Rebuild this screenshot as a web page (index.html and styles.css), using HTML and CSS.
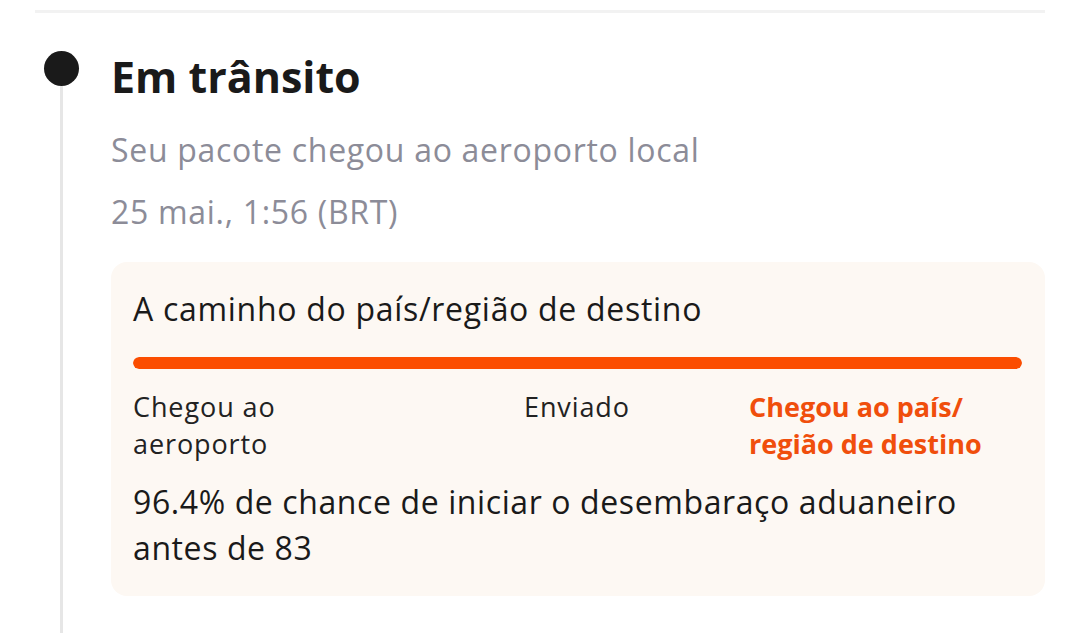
FILE: index.html
```html
<!DOCTYPE html>
<html lang="pt-BR">
<head>
  <meta charset="UTF-8" />
  <meta name="viewport" content="width=device-width, initial-scale=1" />
  <title>Rastreamento</title>
  <link rel="stylesheet" href="styles.css">
</head>
<body>
  <div class="divider"></div>

  <div class="event">
    <div class="rail">
      <span class="dot"></span>
      <span class="line"></span>
    </div>

    <div class="event-body">
      <h2 class="event-title">Em trânsito</h2>
      <p class="event-desc">Seu pacote chegou ao aeroporto local</p>
      <p class="event-date">25 mai., 1:56 (BRT)</p>

      <div class="status-card">
        <div class="card-title">A caminho do país/região de destino</div>
        <div class="progress"><div class="progress-fill" style="width: 100%"></div></div>
        <div class="steps">
          <div class="step">Chegou ao<br>aeroporto</div>
          <div class="step">Enviado</div>
          <div class="step active">Chegou ao país/<br>região de destino</div>
        </div>
        <p class="chance">96.4% de chance de iniciar o desembaraço aduaneiro antes de 83</p>
      </div>
    </div>
  </div>
</body>
</html>
```

FILE: styles.css
```css
body {
  margin: 0;
  background: #fff;
  color: #1a1a1a;
  font-family: 'Open Sans', 'Noto Sans', Arial, sans-serif;
  height: 633px;
  overflow: hidden;
}
.divider {
  height: 3px;
  margin: 10px 35px 0 35px;
  background: #f2f2f2;
}
.event {
  display: grid;
  grid-template-columns: 36px 1fr;
  gap: 32px;
  padding: 38px 35px 0 43px;
  min-height: 600px;
}
.rail {
  display: flex;
  flex-direction: column;
  align-items: center;
}
.dot {
  width: 35px;
  height: 35px;
  border-radius: 50%;
  background: #1a1a1a;
  flex-shrink: 0;
}
.line {
  width: 3px;
  flex: 1;
  background: #e6e6e6;
}
.event-title {
  margin: 2px 0 0 0;
  font-size: 43px;
  line-height: 48px;
  font-weight: 700;
  color: #1a1a1a;
}
.event-desc, .event-date {
  margin: 0;
  font-size: 32px;
  line-height: 40px;
  letter-spacing: 0.7px;
  color: #8c8c98;
}
.event-desc {
  margin-top: 29px;
}
.event-date {
  margin-top: 22px;
}
.status-card {
  margin-top: 30px;
  background: #fdf8f3;
  border-radius: 16px;
  padding: 27px 23px 25px 22px;
}
.card-title {
  font-size: 32px;
  line-height: 40px;
  letter-spacing: 0.7px;
}
.progress {
  margin-top: 28px;
  height: 12px;
  border-radius: 6px;
  background: #f3ddd0;
  overflow: hidden;
}
.progress-fill {
  height: 100%;
  border-radius: 6px;
  background: #fb4d00;
}
.steps {
  display: grid;
  grid-template-columns: 391px 225px 1fr;
  margin-top: 19px;
  font-size: 27px;
  line-height: 37px;
  letter-spacing: 0.9px;
  color: #222;
}
.step.active {
  color: #f04e0c;
  font-weight: 700;
  letter-spacing: 0;
}
.chance {
  margin: 17px 0 0 0;
  font-size: 32px;
  line-height: 46px;
  letter-spacing: 0.6px;
}
```
